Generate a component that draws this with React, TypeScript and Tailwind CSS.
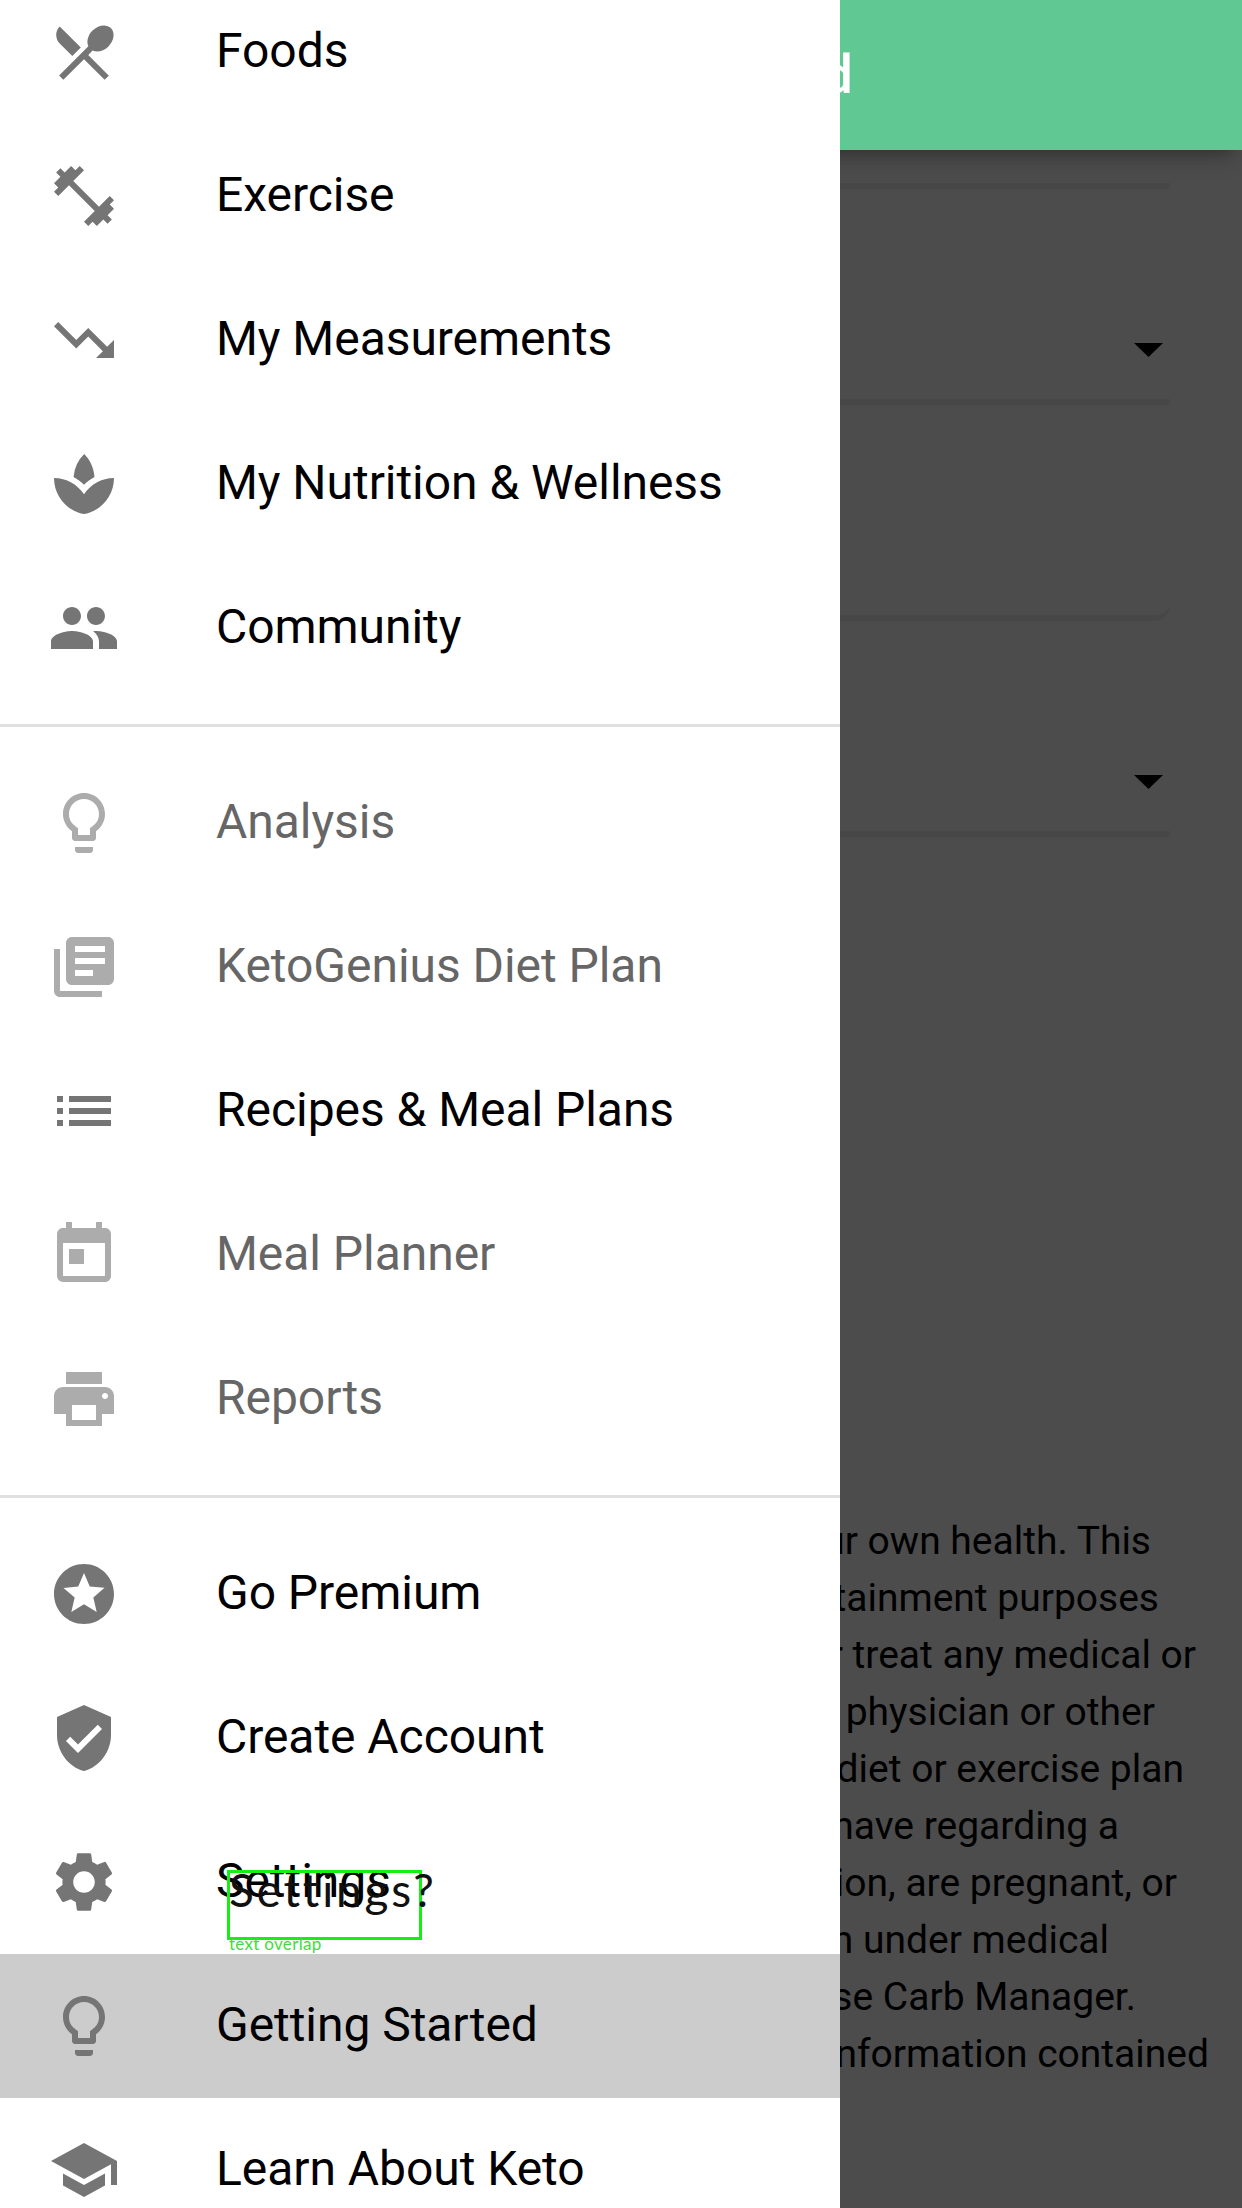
import type { IconType } from 'react-icons';
import {
  MdRestaurantMenu,
  MdFitnessCenter,
  MdTrendingDown,
  MdSpa,
  MdPeople,
  MdLightbulbOutline,
  MdLibraryBooks,
  MdList,
  MdToday,
  MdPrint,
  MdStars,
  MdVerifiedUser,
  MdSettings,
  MdSchool,
} from 'react-icons/md';

type Item = { label: string; icon: IconType; disabled?: boolean; active?: boolean; note?: boolean };

const groups: Item[][] = [
  [
    { label: 'Foods', icon: MdRestaurantMenu },
    { label: 'Exercise', icon: MdFitnessCenter },
    { label: 'My Measurements', icon: MdTrendingDown },
    { label: 'My Nutrition & Wellness', icon: MdSpa },
    { label: 'Community', icon: MdPeople },
  ],
  [
    { label: 'Analysis', icon: MdLightbulbOutline, disabled: true },
    { label: 'KetoGenius Diet Plan', icon: MdLibraryBooks, disabled: true },
    { label: 'Recipes & Meal Plans', icon: MdList },
    { label: 'Meal Planner', icon: MdToday, disabled: true },
    { label: 'Reports', icon: MdPrint, disabled: true },
  ],
  [
    { label: 'Go Premium', icon: MdStars },
    { label: 'Create Account', icon: MdVerifiedUser },
    { label: 'Settings', icon: MdSettings, note: true },
    { label: 'Getting Started', icon: MdLightbulbOutline, active: true },
    { label: 'Learn About Keto', icon: MdSchool },
  ],
];

const lines = [
  { text: 'your own health. This', width: 'w-[1151px]' },
  { text: 'entertainment purposes', width: 'w-[1159px]' },
  { text: 'or treat any medical or', width: 'w-[1196px]' },
  { text: 'physician or other', width: 'w-[1155px]' },
  { text: 'diet or exercise plan', width: 'w-[1184px]' },
  { text: 'have regarding a', width: 'w-[1119px]' },
  { text: 'condition, are pregnant, or', width: 'w-[1177px]' },
  { text: 'when under medical', width: 'w-[1109px]' },
  { text: 'use Carb Manager.', width: 'w-[1136px]' },
  { text: 'information contained', width: 'w-[1209px]' },
];

function OverlapNote() {
  return (
    <div className="absolute left-[227px] top-[60px] h-[70px] w-[195px] border-[3px] border-[#14f014]">
      <span className="absolute left-[-1px] top-[-11px] whitespace-nowrap font-['Lato'] text-[46px] leading-[56px] tracking-[2.8px] text-[#111]">
        Settings?
      </span>
      <span className="absolute left-[-1px] top-[61px] whitespace-nowrap font-['Lato'] text-[17px] leading-[20px] tracking-[0.3px] text-[#3fdc3f]">
        text overlap
      </span>
    </div>
  );
}

function MenuRow({ label, icon: Icon, disabled, active, note }: Item) {
  return (
    <li className={`relative flex h-36 items-center pl-12 ${active ? 'bg-[#ccc]' : ''}`}>
      <Icon className={`size-[72px] shrink-0 ${disabled ? 'text-[#acacac]' : 'text-[#757575]'}`} />
      <span
        className={`ml-24 mb-[3px] whitespace-nowrap text-[48px] leading-[56px] tracking-[-0.05px] ${disabled ? 'text-[#666]' : 'text-black'}`}
      >
        {label}
      </span>
      {note && <OverlapNote />}
    </li>
  );
}

function Field({ select, rounded }: { select?: boolean; rounded?: boolean }) {
  return (
    <div
      className={`flex h-[216px] w-[1098px] items-end justify-end border-b-[6px] border-[#474747] pr-[7px] ${rounded ? 'rounded-br-[16px]' : ''}`}
    >
      {select && (
        <svg className="mb-[42px] h-[14px] w-[29px]" viewBox="0 0 29 14">
          <path d="M0 0h29L14.5 14z" fill="#000" />
        </svg>
      )}
    </div>
  );
}

export default function App() {
  return (
    <div className="relative h-[2208px] w-[1242px] overflow-hidden bg-[#4c4c4c] font-['Roboto',sans-serif]">
      <header className="relative flex h-[150px] w-full items-center bg-[#5fc893] shadow-[0_10px_20px_-8px_#2a2a2a]">
        <h1 className="w-[853px] pb-[1px] text-right text-[54px] font-medium leading-none text-white">Getting Started</h1>
      </header>
      <main>
        <div className="ml-[72px] h-[39px] w-[1098px] border-b-[6px] border-[#474747]" />
        <div className="ml-[72px]">
          <Field select />
          <Field rounded />
          <Field select />
        </div>
        <div className="mt-[676px] text-right text-[39px] leading-[57px] text-black">
          {lines.map((line) => (
            <p key={line.text} className={`whitespace-nowrap ${line.width}`}>
              {line.text}
            </p>
          ))}
        </div>
      </main>
      <nav className="absolute left-0 top-0 h-full w-[840px] overflow-hidden bg-white">
        <div className="-mt-5">
          {groups.map((group, i) => (
            <ul key={i} className={i > 0 ? 'mt-6 border-t-[3px] border-[#e0e0e0] pt-6' : ''}>
              {group.map((item) => (
                <MenuRow key={item.label} {...item} />
              ))}
            </ul>
          ))}
        </div>
      </nav>
    </div>
  );
}
